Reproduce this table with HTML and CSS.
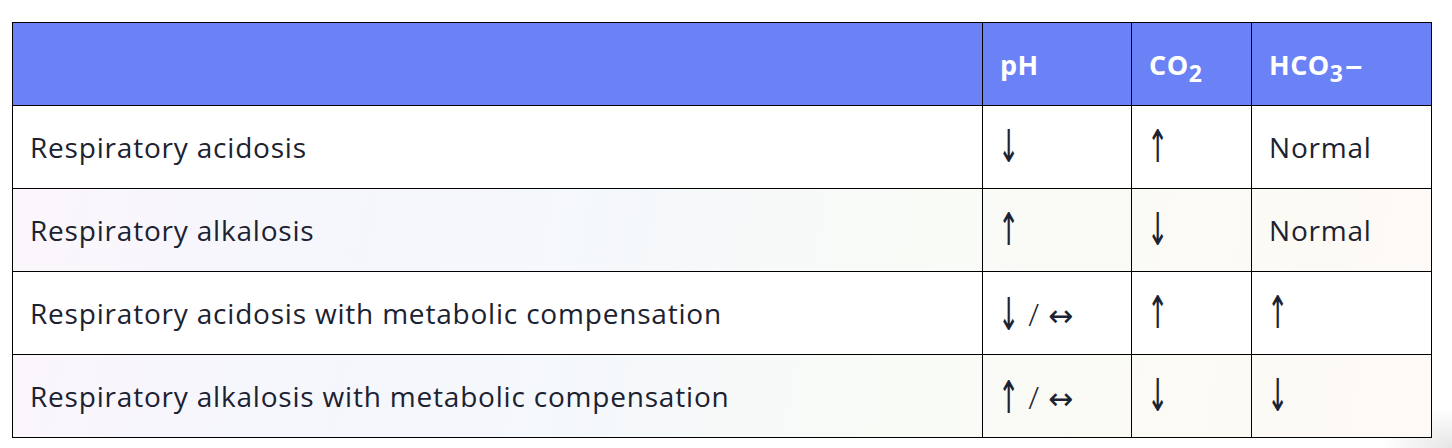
FILE: index.html
```html
<!DOCTYPE html>
<html>
<head>
<meta charset="utf-8">
<link rel="stylesheet" href="styles.css">
</head>
<body>
<div class="page">
<table class="acid-table">
  <colgroup>
    <col class="c-name"><col class="c-ph"><col class="c-co2"><col class="c-hco3">
  </colgroup>
  <thead>
    <tr>
      <th></th>
      <th>pH</th>
      <th>CO<sub>2</sub></th>
      <th>HCO<sub>3</sub><span class="dash">–</span></th>
    </tr>
  </thead>
  <tbody>
    <tr>
      <td>Respiratory acidosis</td>
      <td><span class="arr">↓</span></td>
      <td><span class="arr">↑</span></td>
      <td>Normal</td>
    </tr>
    <tr class="tint">
      <td>Respiratory alkalosis</td>
      <td><span class="arr">↑</span></td>
      <td><span class="arr">↓</span></td>
      <td>Normal</td>
    </tr>
    <tr>
      <td>Respiratory acidosis with metabolic compensation</td>
      <td><span class="arr">↓</span><span class="slash">/</span><span class="lr">↔</span></td>
      <td><span class="arr">↑</span></td>
      <td><span class="arr">↑</span></td>
    </tr>
    <tr class="tint">
      <td>Respiratory alkalosis with metabolic compensation</td>
      <td><span class="arr">↑</span><span class="slash">/</span><span class="lr">↔</span></td>
      <td><span class="arr">↓</span></td>
      <td><span class="arr">↓</span></td>
    </tr>
  </tbody>
</table>
</div>
</body>
</html>
```

FILE: styles.css
```css
html, body {
  margin: 0;
  padding: 0;
  background: #ffffff;
}
body {
  width: 1452px;
  height: 448px;
  overflow: hidden;
  font-family: "Open Sans", Lato, sans-serif;
  color: #1c2230;
  background:
    radial-gradient(ellipse 70px 40px at 1452px 448px, rgba(0,0,0,0.10), rgba(0,0,0,0) 100%),
    #ffffff;
}
.page {
  padding: 22px 0 0 12px;
}
.acid-table {
  border-collapse: collapse;
  table-layout: fixed;
  width: 1420px;
}
.c-name { width: 970px; }
.c-ph { width: 149px; }
.c-co2 { width: 120px; }
.c-hco3 { width: 180px; }
.acid-table th,
.acid-table td {
  border: 1px solid #000;
  padding: 0 17px;
  height: 83px;
  text-align: left;
  vertical-align: middle;
  box-sizing: border-box;
  white-space: nowrap;
}
.acid-table th {
  background: #6b82f6;
  color: #ffffff;
  font-weight: 700;
  font-size: 27px;
  letter-spacing: 0.5px;
}
.acid-table th sub {
  font-size: 0.85em;
  vertical-align: -0.32em;
  line-height: 0;
}
.dash {
  display: inline-block;
  margin-left: 2px;
  transform: scaleX(1.3);
  transform-origin: 0 50%;
}
.acid-table td {
  font-size: 28px;
  font-weight: 400;
  letter-spacing: 0.8px;
}
.arr {
  display: inline-block;
  font-family: "DejaVu Sans", sans-serif;
  font-size: 30px;
  letter-spacing: 0;
  transform: scale(0.85, 1.5);
  transform-origin: 50% 60%;
  margin-left: -4px;
}
.slash {
  display: inline-block;
  font-family: "Open Sans", sans-serif;
  font-size: 32px;
  font-weight: 300;
  letter-spacing: 0;
  margin: 0 9px 0 7px;
}
.lr {
  display: inline-block;
  font-family: "DejaVu Sans", sans-serif;
  font-size: 30px;
  letter-spacing: 0;
}
.tint td {
  background: linear-gradient(100deg, #fcf6fb 0%, #f6f6fd 20%, #f5f8fc 40%, #f9fbf6 65%, #fcfaf5 85%, #fdf9f7 100%);
  background-attachment: fixed;
}
```
